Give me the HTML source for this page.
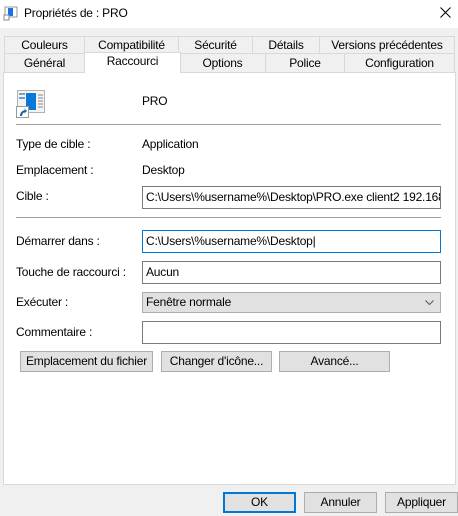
<!DOCTYPE html>
<html><head><style>
*{box-sizing:border-box;margin:0;padding:0}
body{width:458px;height:516px;background:#f0f0f0;font-family:"Liberation Sans",sans-serif;font-size:12px;letter-spacing:-0.2px;color:#000;position:relative;overflow:hidden}
.a{position:absolute;white-space:nowrap}
.tab{position:absolute;border:1px solid #d9d9d9;background:#f0f0f0;text-align:center;line-height:17px;white-space:nowrap}
.fld{position:absolute;background:#fff;border:1px solid #7a7a7a;height:23px;line-height:21px;padding-left:3px;white-space:nowrap;overflow:hidden}
.btn{position:absolute;background:#e1e1e1;border:1px solid #adadad;text-align:center;line-height:19px;height:21px;white-space:nowrap}
.sep{position:absolute;height:1px;background:#a0a0a0;left:16px;width:425px}
</style></head><body>
<div class="a" style="left:0;top:0;width:458px;height:28px;background:#fff"></div>
<svg class="a" style="left:3px;top:5px" width="16" height="16"><rect x="2" y="2" width="12" height="10" fill="#fff" stroke="#999"/><rect x="5" y="3" width="5" height="8" fill="#1a73e8"/><rect x="1" y="10" width="5" height="5" fill="#fff" stroke="#888"/></svg>
<div class="a" style="left:24px;top:6px">Propriétés de : PRO</div>
<svg class="a" style="left:440px;top:7px" width="11" height="11"><path d="M0.5 0.5L10.5 10.5M10.5 0.5L0.5 10.5" stroke="#000" stroke-width="1"/></svg>
<div class="a" style="left:3px;top:72px;width:453px;height:413px;background:#fff;border:1px solid #d9d9d9"></div>
<div class="tab" style="left:4px;top:36px;width:81px;height:18px">Couleurs</div>
<div class="tab" style="left:84px;top:36px;width:95px;height:18px">Compatibilité</div>
<div class="tab" style="left:178px;top:36px;width:75px;height:18px">Sécurité</div>
<div class="tab" style="left:252px;top:36px;width:68px;height:18px">Détails</div>
<div class="tab" style="left:319px;top:36px;width:136px;height:18px">Versions précédentes</div>
<div class="tab" style="left:4px;top:53px;width:81px;height:20px;line-height:19px">Général</div>
<div class="tab" style="left:179px;top:53px;width:87px;height:20px;line-height:19px">Options</div>
<div class="tab" style="left:265px;top:53px;width:80px;height:20px;line-height:19px">Police</div>
<div class="tab" style="left:344px;top:53px;width:111px;height:20px;line-height:19px">Configuration</div>
<div class="tab" style="left:84px;top:52px;width:97px;height:21px;background:#fff;border-bottom:none;line-height:17px">Raccourci</div>
<svg class="a" style="left:15px;top:89px" width="32" height="29"><rect x="2.5" y="1.5" width="27" height="22" fill="#f4f4f4" stroke="#b0b0b0"/><rect x="4" y="4" width="6" height="2" fill="#7aa"/><rect x="4" y="8" width="6" height="2" fill="#5f9fdf"/><rect x="11" y="4" width="10" height="17" fill="#0a78d7"/><g stroke="#888"><line x1="23" y1="6" x2="28" y2="6"/><line x1="23" y1="9" x2="28" y2="9"/><line x1="23" y1="12" x2="28" y2="12"/><line x1="23" y1="15" x2="28" y2="15"/><line x1="23" y1="18" x2="28" y2="18"/></g><rect x="1.5" y="17.5" width="12" height="11" fill="#fff" stroke="#999"/><path d="M5 27 Q5 22 10 21 L9 19 L12 22 L9 25 L10 23 Q7 24 7 27Z" fill="#1f5fa8"/></svg>
<div class="a" style="left:142px;top:94px">PRO</div>
<div class="sep" style="top:124px"></div>
<div class="a" style="left:16px;top:137px">Type de cible :</div>
<div class="a" style="left:142px;top:137px">Application</div>
<div class="a" style="left:16px;top:163px">Emplacement :</div>
<div class="a" style="left:142px;top:163px">Desktop</div>
<div class="a" style="left:16px;top:189px">Cible :</div>
<div class="fld" style="left:142px;top:186px;width:299px">C:\Users\%username%\Desktop\PRO.exe client2 192.168.0.1</div>
<div class="sep" style="top:217px"></div>
<div class="a" style="left:16px;top:234px">Démarrer dans :</div>
<div class="fld" style="left:142px;top:230px;width:299px;border-color:#0078d7">C:\Users\%username%\Desktop|</div>
<div class="a" style="left:16px;top:265px">Touche de raccourci :</div>
<div class="fld" style="left:142px;top:261px;width:299px">Aucun</div>
<div class="a" style="left:16px;top:295px">Exécuter :</div>
<div class="fld" style="left:142px;top:292px;width:299px;height:21px;line-height:19px;background:#e1e1e1;border-color:#adadad">Fenêtre normale<svg class="a" style="right:6px;top:7px" width="9" height="5"><path d="M0.5 0.5L4.5 4.5L8.5 0.5" fill="none" stroke="#555"/></svg></div>
<div class="a" style="left:16px;top:325px">Commentaire :</div>
<div class="fld" style="left:142px;top:321px;width:299px"></div>
<div class="btn" style="left:20px;top:351px;width:133px">Emplacement du fichier</div>
<div class="btn" style="left:161px;top:351px;width:111px">Changer d'icône...</div>
<div class="btn" style="left:279px;top:351px;width:111px">Avancé...</div>
<div class="btn" style="left:223px;top:492px;width:73px;border:2px solid #0078d7;line-height:17px">OK</div>
<div class="btn" style="left:304px;top:492px;width:73px">Annuler</div>
<div class="btn" style="left:385px;top:492px;width:73px">Appliquer</div>
</body></html>
